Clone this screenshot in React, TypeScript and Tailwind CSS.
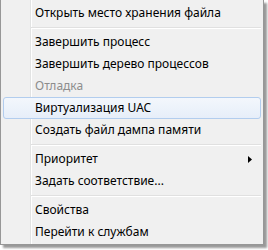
import React from "react";

type Item =
  | { kind: "item"; label: string; disabled?: boolean; hover?: boolean; sub?: boolean }
  | { kind: "sep" };

const items: Item[] = [
  { kind: "item", label: "Открыть место хранения файла" },
  { kind: "sep" },
  { kind: "item", label: "Завершить процесс" },
  { kind: "item", label: "Завершить дерево процессов" },
  { kind: "item", label: "Отладка", disabled: true },
  { kind: "item", label: "Виртуализация UAC", hover: true },
  { kind: "item", label: "Создать файл дампа памяти" },
  { kind: "sep" },
  { kind: "item", label: "Приоритет", sub: true },
  { kind: "item", label: "Задать соответствие..." },
  { kind: "sep" },
  { kind: "item", label: "Свойства" },
  { kind: "item", label: "Перейти к службам" },
];

export default function App() {
  return (
    <div className="w-[268px] h-[250px] bg-white overflow-hidden">
      <div
        className="w-[264px] h-[245px] border-l border-r border-b border-[#979797] px-[2px] pt-[2px] flex flex-col shadow-[3px_3px_2px_rgba(0,0,0,0.4)] bg-[linear-gradient(to_right,#f0f0f0_29px,#e2e3e3_29px,#e2e3e3_30px,#ffffff_30px,#ffffff_31px,#f0f0f0_31px)]"
        style={{ fontFamily: '"Noto Sans", "Open Sans", sans-serif' }}
      >
        {items.map((it, i) =>
          it.kind === "sep" ? (
            <div key={i} className="h-[7px] flex flex-col pt-[3px] pl-[28px] pr-0">
              <div className="h-px bg-[#e0e0e0]" />
              <div className="h-px bg-white" />
            </div>
          ) : (
            <div
              key={i}
              className={
                "h-[22px] flex items-center pl-[32px] pr-[8px] text-[12px] leading-none rounded-[3px] border " +
                (it.hover
                  ? "border-[#b2cdee] bg-[linear-gradient(to_bottom,#f3f7fc,#e6eef9)]"
                  : "border-transparent") +
                (it.disabled ? " text-[#8d8d8d]" : " text-black")
              }
            >
              <span className="flex-1 -ml-px">{it.label}</span>
              {it.sub && (
                <svg width="4" height="7" viewBox="0 0 4 7">
                  <polygon points="0,0 4,3.5 0,7" fill="#000" />
                </svg>
              )}
            </div>
          )
        )}
      </div>
    </div>
  );
}
